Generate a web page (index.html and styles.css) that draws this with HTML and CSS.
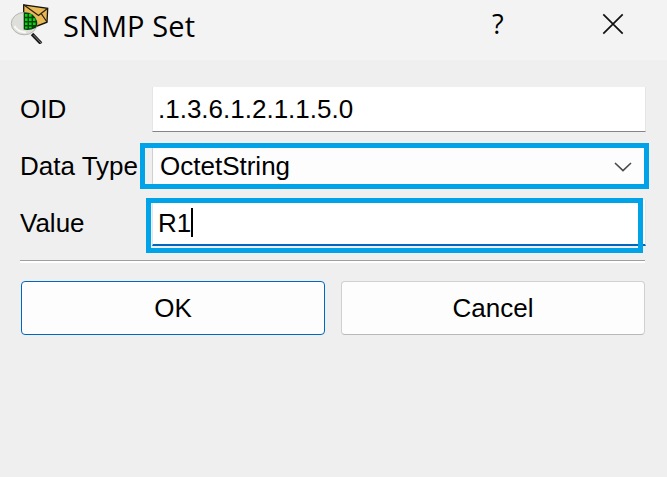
FILE: index.html
```html
<!DOCTYPE html>
<html lang="en">
<head>
<meta charset="utf-8">
<title>SNMP Set</title>
<link rel="stylesheet" href="styles.css">
</head>
<body>
<header class="titlebar">
  <svg class="app-icon" width="40" height="44" viewBox="0 0 40 44">
    <path d="M13.7 4.8 37.7 8.3 37 22.2 24 27.2 13.7 23Z" fill="#e9b957" stroke="#17130b" stroke-width="1.3"/>
    <path d="M14 5 28.5 15.5 37.5 8.5M31.5 14 37 22" fill="none" stroke="#2b2110" stroke-width="1.3"/>
    <path d="M22 34 31 43.5" stroke="#1c1c1c" stroke-width="3.4"/>
    <path d="M23.5 35 31.5 43.5" stroke="#8a8a8a" stroke-width=".9"/>
    <ellipse cx="14.2" cy="23.6" rx="12.9" ry="11.2" fill="#dededa" stroke="#b5b5b0"/>
    <path d="M13.7 12.2Q24 12 27 21Q28 26 25.5 28Q19.5 30.8 13.7 29.5Z" fill="#063f08"/>
    <path d="M15 14h2.6v2.7H15zM19 14h2.6v2.7H19zM15 18.2h2.6v2.8H15zM19 18.2h2.6v2.8H19zM23 18.2h2.4v2.8H23zM15 22.4h2.6v2.7H15zM19 22.4h2.6v2.7H19zM23 22.4h2.6v2.7H23zM15 26.5h2.6v2H15zM19 26.5h2.6v1.7H19z" fill="#08d316"/>
    <path d="M4.5 26Q8 32.5 16 32.2" fill="none" stroke="#f8f8f4" stroke-width="2"/>
  </svg>
  <h1 class="title">SNMP Set</h1>
  <span class="help">?</span>
  <svg class="close" width="22" height="22" viewBox="0 0 22 22"><path d="M1.3 1.3 20.7 20.7M20.7 1.3 1.3 20.7" stroke="#111" stroke-width="1.7"/></svg>
</header>
<main class="form">
  <div class="row">
    <span class="label">OID</span>
    <div class="field">.1.3.6.1.2.1.1.5.0</div>
  </div>
  <div class="row">
    <span class="label">Data Type</span>
    <div class="field select">OctetString
      <svg class="chevron" width="18" height="10" viewBox="0 0 18 10"><path d="M1 1 9 8.7 17 1" fill="none" stroke="#4a4a4a" stroke-width="1.6"/></svg>
    </div>
    <span class="mark mark-type"></span>
  </div>
  <div class="row">
    <span class="label">Value</span>
    <div class="field focused">R1<span class="caret"></span></div>
    <span class="mark mark-value"></span>
  </div>
  <div class="rule"></div>
  <div class="buttons">
    <button class="button primary">OK</button>
    <button class="button">Cancel</button>
  </div>
</main>
</body>
</html>
```
FILE: styles.css
```css
* { box-sizing: border-box; }
body {
  margin: 0;
  height: 477px;
  overflow: hidden;
  background: #efefef;
  color: #000;
  font: 26px/30px "Liberation Sans", Arial, sans-serif;
}
.titlebar {
  display: flex;
  height: 60px;
  padding-left: 10px;
  background: #f3f3f3;
}
.app-icon { flex: none; }
.title {
  width: 419px;
  margin: 6px 0 0 13px;
  font: 400 29px/40px "Open Sans", "Noto Sans", sans-serif;
  letter-spacing: 0.1px;
  white-space: nowrap;
}
.help {
  width: 20px;
  margin-top: 4px;
  margin-left: 10px;
  font: 27px/40px "Open Sans", "Noto Sans", sans-serif;
}
.close { margin: 13px 0 0 90px; }
.form { padding: 27px 21px 0 20px; }
.row {
  position: relative;
  display: flex;
  height: 46px;
  margin-bottom: 11px;
}
.row:first-child { height: 45px; }
.label {
  flex: 0 0 132px;
  padding-top: 8px;
  white-space: nowrap;
}
.row:first-child .label { padding-top: 7px; }
.field {
  flex: 0 0 494px;
  padding: 7px 0 0 5px;
  background: #fff;
  border: 1px solid #e5e5e5;
  border-bottom-color: #858585;
  border-top: 0;
}
.select {
  display: flex;
  justify-content: space-between;
  padding: 8px 13px 0 7px;
  background: #fdfdfd;
  border-color: #d0d0d0;
}
.chevron { margin-top: 11px; }
.focused {
  display: flex;
  padding-top: 8px;
  border-bottom: 2px solid #0067c0;
}
.caret {
  width: 2px;
  height: 29px;
  background: #000;
}
.mark {
  position: absolute;
  border: 5px solid #00a2e8;
}
.mark-type { left: 120px; top: 0; width: 509px; height: 46px; }
.mark-value { left: 126px; top: -2px; width: 497px; height: 55px; }
.rule {
  width: 625px;
  height: 3px;
  margin-top: 14px;
  border-top: 1px solid #a0a0a0;
  background: #fff;
}
.buttons {
  display: flex;
  gap: 16px;
  margin: 18px 0 0 1px;
}
.button {
  width: 304px;
  height: 54px;
  padding: 0;
  border: 1px solid #d0d0d0;
  border-bottom-color: #b9b9b9;
  border-radius: 4px;
  background: #fdfdfd;
  color: #000;
  font: inherit;
}
.primary { border-color: #0067c0; }
```
